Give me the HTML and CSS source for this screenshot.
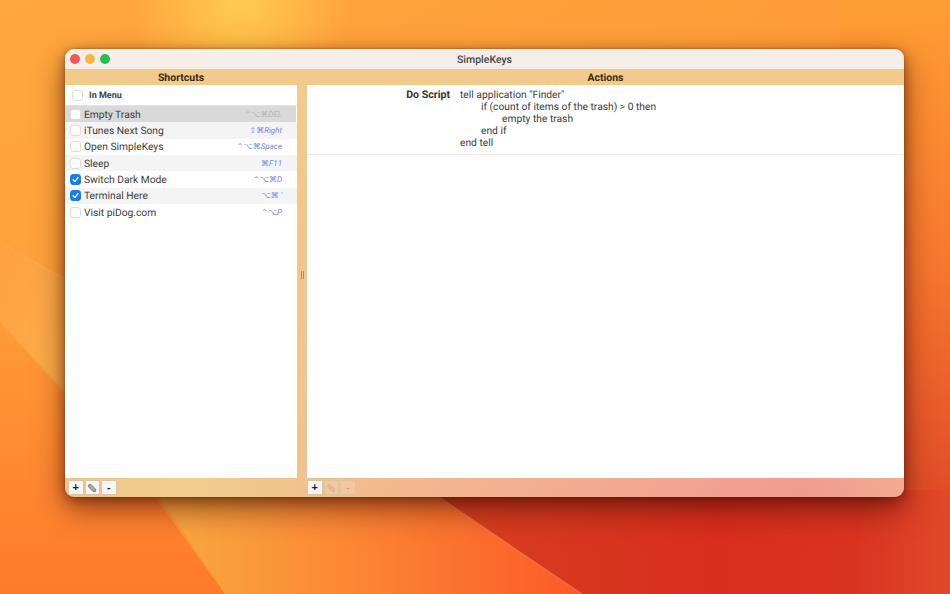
FILE: index.html
```html
<!DOCTYPE html>
<html lang="en">
<head>
  <meta charset="UTF-8">
  <title>SimpleKeys</title>
  <link rel="stylesheet" href="styles.css">
</head>
<body>
  <svg class="wallpaper" viewBox="0 0 950 594" aria-hidden="true">
    <defs>
      <linearGradient id="wpBase" x1="0" y1="0" x2="1" y2="1">
        <stop offset="0" stop-color="#ffa83e"/>
        <stop offset="0.5" stop-color="#ff9a38"/>
        <stop offset="1" stop-color="#ff6f2a"/>
      </linearGradient>
      <radialGradient id="wpGlow" cx="240" cy="0" r="110" gradientUnits="userSpaceOnUse">
        <stop offset="0" stop-color="#ffcb50"/>
        <stop offset="1" stop-color="#ffcb50" stop-opacity="0"/>
      </radialGradient>
      <linearGradient id="wpRight" x1="0" y1="0" x2="0" y2="1">
        <stop offset="0" stop-color="#ff9e34"/>
        <stop offset="0.45" stop-color="#f7762e"/>
        <stop offset="0.85" stop-color="#e04a28"/>
        <stop offset="1" stop-color="#d93e24"/>
      </linearGradient>
      <linearGradient id="wpBand" x1="0" y1="0" x2="1" y2="0">
        <stop offset="0" stop-color="#f8ab42"/>
        <stop offset="0.35" stop-color="#fc8f38"/>
        <stop offset="1" stop-color="#fb5a26"/>
      </linearGradient>
      <linearGradient id="wpRed" x1="0" y1="0" x2="1" y2="0">
        <stop offset="0" stop-color="#d8401f"/>
        <stop offset="0.55" stop-color="#d82e1e"/>
        <stop offset="0.82" stop-color="#d93420"/>
        <stop offset="1" stop-color="#e04a28"/>
      </linearGradient>
      <linearGradient id="wpLeftBand" x1="0" y1="0" x2="1" y2="1">
        <stop offset="0" stop-color="#ffa040"/>
        <stop offset="1" stop-color="#fbb04c"/>
      </linearGradient>
      <linearGradient id="wpLow" x1="0" y1="0" x2="0" y2="1">
        <stop offset="0" stop-color="#ff9a38"/>
        <stop offset="1" stop-color="#ff7a2c"/>
      </linearGradient>
    </defs>
    <rect width="950" height="594" fill="url(#wpBase)"/>
    <rect width="950" height="594" fill="url(#wpGlow)"/>
    <rect x="840" width="110" height="594" fill="url(#wpRight)"/>
    <polygon points="0,322 150,490 225,594 0,594" fill="url(#wpLow)"/>
    <polygon points="0,243 70,282 70,397 0,322" fill="url(#wpLeftBand)"/>
    <polygon points="155,490 430,490 582,594 225,594" fill="url(#wpBand)"/>
    <polygon points="430,490 904,490 950,490 950,594 582,594" fill="url(#wpRed)"/>
    <line x1="432" y1="494" x2="582" y2="594" stroke="#f0764a" stroke-width="1.5" opacity="0.7"/>
    <line x1="0" y1="243" x2="65" y2="279" stroke="#ffb060" stroke-width="1"/>
  </svg>

  <div class="window">
    <div class="titlebar">
      <div class="lights">
        <span class="light light-close"></span>
        <span class="light light-min"></span>
        <span class="light light-max"></span>
      </div>
      <span class="title">SimpleKeys</span>
    </div>

    <div class="columns">
      <div class="col-left">
        <div class="col-head">Shortcuts</div>
        <div class="panel">
          <div class="list-head">
            <span class="check check-head"></span>
            <span class="list-label">In Menu</span>
          </div>
          <div class="row row-selected">
            <span class="check"></span>
            <span class="row-name">Empty Trash</span>
            <span class="keys">⌃⌥⌘DEL</span>
          </div>
          <div class="row row-alt">
            <span class="check"></span>
            <span class="row-name">iTunes Next Song</span>
            <span class="keys">⇧⌘Right</span>
          </div>
          <div class="row">
            <span class="check"></span>
            <span class="row-name">Open SimpleKeys</span>
            <span class="keys">⌃⌥⌘Space</span>
          </div>
          <div class="row row-alt">
            <span class="check"></span>
            <span class="row-name">Sleep</span>
            <span class="keys">⌘F11</span>
          </div>
          <div class="row">
            <span class="check check-on">
              <svg viewBox="0 0 12 12"><path d="M2.8 6.3 5.1 8.8 9.3 3.4" fill="none" stroke="#fff" stroke-width="1.7" stroke-linecap="round" stroke-linejoin="round"/></svg>
            </span>
            <span class="row-name">Switch Dark Mode</span>
            <span class="keys">⌃⌥⌘D</span>
          </div>
          <div class="row row-alt">
            <span class="check check-on">
              <svg viewBox="0 0 12 12"><path d="M2.8 6.3 5.1 8.8 9.3 3.4" fill="none" stroke="#fff" stroke-width="1.7" stroke-linecap="round" stroke-linejoin="round"/></svg>
            </span>
            <span class="row-name">Terminal Here</span>
            <span class="keys">⌥⌘ '</span>
          </div>
          <div class="row">
            <span class="check"></span>
            <span class="row-name">Visit piDog.com</span>
            <span class="keys">⌃⌥P</span>
          </div>
        </div>
        <div class="toolbar">
          <button class="tool">+</button>
          <button class="tool">
            <svg viewBox="0 0 12 12" class="pencil"><path d="M2.2 2 4.6 1.6 10.4 7.4 10.4 10.4 7.4 10.4 1.6 4.6Z" fill="#9a9a9a" stroke="#666" stroke-width="0.7"/><path d="M3.6 5.4 5.4 3.6M5.2 7 7 5.2M6.8 8.6 8.6 6.8" stroke="#e4e4e4" stroke-width="0.7"/></svg>
          </button>
          <button class="tool">-</button>
        </div>
      </div>

      <div class="splitter"><span class="grip"></span></div>

      <div class="col-right">
        <div class="col-head">Actions</div>
        <div class="panel">
          <div class="action">
            <span class="action-label">Do Script</span>
            <pre class="action-script">tell application "Finder"
	if (count of items of the trash) &gt; 0 then
		empty the trash
	end if
end tell</pre>
          </div>
        </div>
        <div class="toolbar">
          <button class="tool">+</button>
          <button class="tool tool-off">
            <svg viewBox="0 0 12 12" class="pencil"><path d="M2.2 2 4.6 1.6 10.4 7.4 10.4 10.4 7.4 10.4 1.6 4.6Z" fill="#9a9a9a" stroke="#666" stroke-width="0.7"/></svg>
          </button>
          <button class="tool tool-off">-</button>
        </div>
      </div>
    </div>
  </div>
</body>
</html>
```

FILE: styles.css
```css
html, body {
  margin: 0;
  height: 100%;
  overflow: hidden;
}

body {
  position: relative;
  width: 950px;
  height: 594px;
  background: #ff9a38;
  font-family: "Roboto", "Liberation Sans", sans-serif;
  font-size: 10.25px;
  color: #333;
  text-rendering: geometricPrecision;
}

.wallpaper {
  position: absolute;
  left: 0;
  top: 0;
  width: 950px;
  height: 594px;
  filter: blur(0.6px);
}

.window {
  position: absolute;
  left: 65px;
  top: 49px;
  width: 839px;
  height: 448px;
  display: flex;
  flex-direction: column;
  border-radius: 9px;
  overflow: hidden;
  box-shadow: 0 12px 30px rgba(60, 10, 0, 0.55), 0 3px 12px rgba(60, 10, 0, 0.4), 0 0 2px rgba(90, 40, 0, 0.5);
  background: linear-gradient(90deg, #f0c48a 0%, #f1cd8f 14%, #f2bb8e 36%, #f3a592 70%, #f19a90 88%, #f2aa90 100%);
}

.titlebar {
  position: relative;
  height: 21px;
  flex: none;
  display: flex;
  align-items: center;
  justify-content: center;
  background: #f4ede8;
  border-bottom: 1px solid #e4c79c;
  box-sizing: border-box;
}

.title {
  font-size: 10.5px;
  font-weight: 500;
  color: #444;
}

.lights {
  position: absolute;
  left: 5px;
  top: 5px;
  display: flex;
  gap: 5px;
}

.light {
  width: 10px;
  height: 10px;
  border-radius: 50%;
}

.light-close { background: #f0575a; }
.light-min { background: #f8b548; }
.light-max { background: #27c04f; }

.columns {
  flex: 1;
  display: flex;
  min-height: 0;
  background: linear-gradient(180deg, #f2ca8c 0%, #f2ca8c 4%, rgba(242, 202, 140, 0) 100%);
}

.col-left {
  width: 232px;
  flex: none;
  display: flex;
  flex-direction: column;
}

.col-right {
  flex: 1;
  display: flex;
  flex-direction: column;
  min-width: 0;
}

.col-head {
  height: 15px;
  flex: none;
  line-height: 15px;
  text-align: center;
  font-size: 10.5px;
  font-weight: 700;
  color: #3a2a14;
}

.panel {
  flex: 1;
  background: #fff;
  min-height: 0;
}

.splitter {
  width: 10px;
  flex: none;
  display: flex;
  align-items: flex-start;
  justify-content: center;
  padding-top: 201px;
  box-sizing: border-box;
}

.grip {
  width: 1px;
  height: 8px;
  border-left: 1px solid #9a9088;
  border-right: 1px solid #9a9088;
}

.list-head {
  height: 20px;
  display: flex;
  align-items: center;
  gap: 6px;
  padding-left: 7px;
  font-size: 9px;
  font-weight: 700;
  color: #444;
  border-bottom: 1px solid #e2e2e2;
}

.list-label {
  padding-top: 1px;
}

.row {
  height: 16.33px;
  display: flex;
  align-items: center;
  padding: 0 15px 0 5px;
  box-sizing: border-box;
}

.row-alt { background: #f4f4f4; }
.row-selected { background: #d9d9d9; margin-right: 1px; padding-right: 14px; }

.row-name {
  flex: 1;
  margin-left: 3px;
  color: #3c3c3c;
}

.check {
  width: 11px;
  height: 11px;
  flex: none;
  box-sizing: border-box;
  border: 1px solid #dcdcdc;
  border-radius: 3px;
  background: #fff;
  display: flex;
}

.check-on {
  background: #1a7ee8;
  border-color: #1a7ee8;
}

.check-on svg {
  width: 100%;
  height: 100%;
}

.keys {
  font-family: "Roboto", "DejaVu Sans", sans-serif;
  font-size: 8px;
  font-style: italic;
  color: #7a82ea;
}

.row-selected .keys { color: #b4b4b4; }

.action {
  display: flex;
  height: 70px;
  box-sizing: border-box;
  border-bottom: 1px solid #eee;
}

.action-label {
  width: 143px;
  flex: none;
  padding-top: 3px;
  text-align: right;
  font-size: 10.6px;
  font-weight: 700;
  color: #333;
}

.action-script {
  margin: 3.5px 0 0 10px;
  font: inherit;
  line-height: 12px;
  tab-size: 21px;
  color: #3c3c3c;
}

.toolbar {
  height: 19px;
  flex: none;
  display: flex;
  gap: 1px;
  padding: 2px 0 0 3px;
  box-sizing: border-box;
}

.col-right .toolbar {
  padding-left: 0;
}

.tool {
  width: 15.5px;
  height: 15px;
  padding: 0;
  margin: 0;
  display: flex;
  align-items: center;
  justify-content: center;
  background: #f5f5f5;
  border: 1px solid #d9c4a6;
  border-radius: 1px;
  font-family: "Liberation Sans", sans-serif;
  font-size: 11px;
  font-weight: 700;
  line-height: 1;
  color: #222;
}

.tool-off {
  background: rgba(255, 255, 255, 0.2);
  color: #b89a88;
  opacity: 0.7;
}

.pencil {
  width: 10px;
  height: 10px;
}

.tool-off .pencil {
  opacity: 0.35;
}
```
